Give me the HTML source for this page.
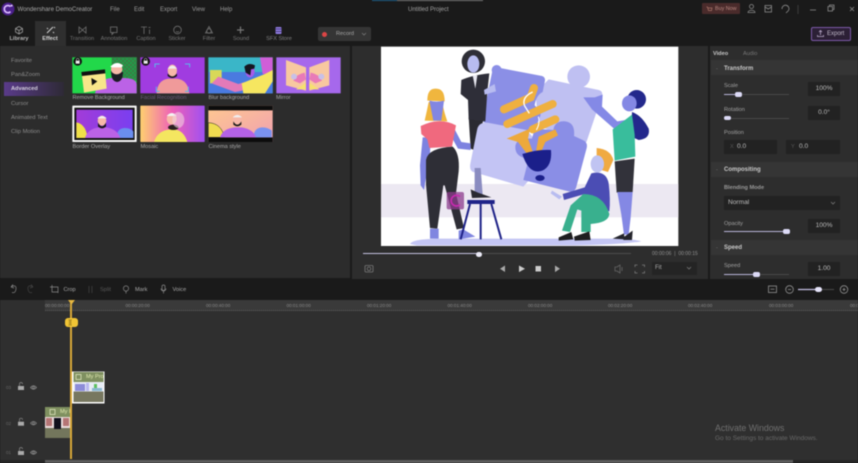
<!DOCTYPE html>
<html><head><meta charset="utf-8"><style>
html,body{margin:0;padding:0;background:#1a1a1a}
#p{position:relative;width:858px;height:463px;overflow:hidden;background:#1a1a1a;font-family:"Liberation Sans",sans-serif;color:#bbb;filter:blur(.4px)}
#p>*,.a{position:absolute}
.t{position:absolute;white-space:nowrap;font-size:5.6px;line-height:8px}
.c{transform:translateX(-50%)}
.b{font-weight:bold}
.box{position:absolute;background:#222;color:#bbb;font-size:6.6px;line-height:14px;text-align:center}
.hd{position:absolute;left:711px;width:147px;height:15px;background:#353535}
.m{color:#8a8a8a;font-size:5.8px}
</style></head><body><div id="p">

<!-- top bar -->
<svg style="left:1px;top:2px" width="14" height="14" viewBox="0 0 14 14"><circle cx="7" cy="7" r="6.5" fill="#4a1f8a"/><path d="M9.500 4.600A3.600 3.600 0 1 0 9.500 9.600" fill="none" stroke="#d9b8ff" stroke-width="1.700"/><circle cx="10.600" cy="3.600" r="1" fill="#e8d0ff"/></svg>
<div class="t" style="left:17.500px;top:5.500px;font-size:6.100px;color:#a8a8a8">Wondershare DemoCreator</div>
<div class="t" style="left:110px;top:5.500px;font-size:6px;color:#999">File</div>
<div class="t" style="left:134px;top:5.500px;font-size:6px;color:#999">Edit</div>
<div class="t" style="left:160px;top:5.500px;font-size:6px;color:#999">Export</div>
<div class="t" style="left:192px;top:5.500px;font-size:6px;color:#999">View</div>
<div class="t" style="left:220px;top:5.500px;font-size:6px;color:#999">Help</div>
<div class="t" style="left:408px;top:5.500px;font-size:6px;color:#a0a0a0">Untitled Project</div>
<div style="left:372px;top:0;width:26px;height:1px;background:#1e5f88"></div>
<div style="left:397px;top:0;width:86px;height:1px;background:#777"></div>

<div style="left:702px;top:3px;width:38px;height:11px;background:#4a2b2b;border-radius:1px"></div>
<svg style="left:706px;top:5.500px" width="7" height="7" viewBox="0 0 7 7" fill="none" stroke="#a87468" stroke-width=".7"><path d="M.5 1h1l1 3.500h3L6 2H2"/></svg>
<div class="t" style="left:715px;top:5px;font-size:5.400px;color:#b88880">Buy Now</div>
<svg style="left:745px;top:2px" width="113" height="14" viewBox="0 0 113 14" fill="none" stroke="#8a8a8a" stroke-width=".8">
<circle cx="6.500" cy="4.500" r="2"/><path d="M3 10.500C3 7.500 10 7.500 10 10.500Z"/>
<rect x="20" y="3.500" width="6.500" height="6.500"/><path d="M20 5l3.200 2L26.500 5"/>
<path d="M37 7a3.500 3.500 0 1 1 6.500 1.500M41 11l2.500-2.500"/>
<path d="M53 3v9" stroke="#444"/>
<path d="M65 8h6"/><rect x="83" y="4.500" width="4.500" height="4.500"/><path d="M84.500 4.500V3h4.500v4.500h-1.500"/>
<path d="M105 5l4 4M109 5l-4 4"/></svg>

<!-- toolbar -->
<div style="left:35px;top:21px;width:31px;height:25px;background:#2f2f2f"></div>
<svg style="left:0;top:20px" width="310" height="26" viewBox="0 0 310 26" fill="none" stroke="#707070" stroke-width=".8">
<path d="M15.500 8.500l3.500-2 3.500 2v3.500l-3.500 2-3.500-2zM15.500 8.500l3.500 2 3.500-2M19 10.500V14" stroke="#999"/>
<path d="M47 13l6-6M54 7l1 1M47 8l1 1M53 12l1 1" stroke="#ccc" stroke-width="1.100"/>
<path d="M79 7v6l3.500-3zM86 7v6l-3.500-3z"/>
<rect x="110.500" y="7" width="6.500" height="5.500"/><path d="M112 12.500v2l2-2"/>
<path d="M141 7h6M144 7v7M149.500 9.500v4.500M148.500 7.500h2"/>
<circle cx="177.500" cy="10" r="3.800"/><path d="M176 9h.1M179 9h.1M176 11.500q1.500 1 3 0"/>
<path d="M209 6.500l3.500 6.500h-7z"/><circle cx="209" cy="11" r="2.200"/>
<path d="M240.500 6.500v7M237 10h7" stroke="#777" stroke-width="1.200"/>
<rect x="275.500" y="7" width="6" height="7" rx="1" fill="#8f7ae0" stroke="none"/><path d="M275 9h7M275 11.500h7" stroke="#3a3060"/>
</svg>
<div class="t c b" style="left:19px;top:35px;color:#b8b8b8">Library</div>
<div class="t c b" style="left:50px;top:35px;color:#d8d8d8">Effect</div>
<div class="t c" style="left:82px;top:35px;color:#6f6f6f">Transition</div>
<div class="t c" style="left:114px;top:35px;color:#747474">Annotation</div>
<div class="t c" style="left:146px;top:35px;color:#747474">Caption</div>
<div class="t c" style="left:177px;top:35px;color:#747474">Sticker</div>
<div class="t c" style="left:209px;top:35px;color:#747474">Filter</div>
<div class="t c" style="left:241px;top:35px;color:#747474">Sound</div>
<div class="t c" style="left:279px;top:35px;color:#808080">SFX Store</div>

<div style="left:318px;top:27px;width:53px;height:14px;background:#353535;border-radius:2px"></div>
<div style="left:322px;top:31.500px;width:5px;height:5px;border-radius:50%;background:#dc4545"></div>
<div class="t" style="left:336px;top:30px;color:#a5a5a5">Record</div>
<svg style="left:361px;top:32px" width="6" height="4"><path d="M1 1l2 2 2-2" stroke="#777" fill="none" stroke-width=".8"/></svg>

<div style="left:811px;top:27px;width:40px;height:14px;background:#2c2036;border:.7px solid #7c5aa8;border-radius:2px;box-sizing:border-box"></div>
<svg style="left:816px;top:29px" width="9" height="9" viewBox="0 0 9 9" fill="none" stroke="#b8a8c8" stroke-width=".8"><path d="M4.500 6V1.500M3 3l1.500-1.500L6 3M1.500 6v1.500h6V6"/></svg>
<div class="t" style="left:827px;top:30px;font-size:6px;color:#c0b8c8">Export</div>

<!-- panels -->
<div style="left:0;top:46px;width:350px;height:232px;background:#2c2c2c"></div>
<div style="left:352px;top:46px;width:356px;height:233px;background:#2d2d2d"></div>
<div style="left:710px;top:46px;width:148px;height:233px;background:#2d2d2d"></div>

<!-- left menu -->
<div style="left:4px;top:82px;width:60px;height:14px;background:linear-gradient(90deg,#5a3b8a,#2e2a36)"></div>
<div class="t m" style="left:11px;top:57px">Favorite</div>
<div class="t m" style="left:11px;top:71px">Pan&amp;Zoom</div>
<div class="t b" style="left:11px;top:85px;color:#d5d0de">Advanced</div>
<div class="t m" style="left:11px;top:100px">Cursor</div>
<div class="t m" style="left:11px;top:114px">Animated Text</div>
<div class="t m" style="left:11px;top:128px">Clip Motion</div>

<!-- thumbnails -->
<svg style="left:0;top:50px" width="350" height="100" viewBox="0 0 1050 300">
<defs>
<linearGradient id="g2" x1="0" y1="0" x2="1" y2="0"><stop offset="0" stop-color="#a23cd8"/><stop offset="1" stop-color="#7a3ff0"/></linearGradient>
<linearGradient id="g3" x1="0" y1="0" x2="1" y2="0"><stop offset="0" stop-color="#ffd070"/><stop offset=".5" stop-color="#ee60b8"/><stop offset="1" stop-color="#a050f0"/></linearGradient>
<linearGradient id="g4" x1="0" y1="0" x2="1" y2="1"><stop offset="0" stop-color="#ffc890"/><stop offset="1" stop-color="#f0a0b0"/></linearGradient>
<pattern id="ch" width="12" height="12" patternUnits="userSpaceOnUse"><rect width="12" height="12" fill="#1f9f4a"/><rect width="6" height="6" fill="#3d7a45"/><rect x="6" y="6" width="6" height="6" fill="#3d7a45"/></pattern>
</defs>
<!-- 1 -->
<rect x="217" y="22" width="193" height="108" fill="#22d84a"/>
<rect x="335" y="22" width="75" height="70" fill="url(#ch)"/>
<path d="M285 130q10-44 50-46l40 0q35 2 35 20v26z" fill="#bb62e6"/>
<path d="M333 62q0 32 18 34 18-2 18-30z" fill="#1c1c24"/><ellipse cx="350" cy="58" rx="17" ry="15" fill="#f6b8a8"/><path d="M331 50q18-20 38-4l-4 6h-30z" fill="#fff"/>
<path d="M244 66l71-8 1 14-70 8z" fill="#111"/><path d="M246 78l70-8 4 46-68 12z" fill="#f8e68a"/><path d="M274 84l18 10-16 12z" fill="#111"/>
<circle cx="233" cy="34" r="13" fill="#111"/><rect x="227" y="32" width="12" height="9" fill="#eee"/><path d="M229 32v-3a4 4 0 0 1 8 0v3" stroke="#eee" fill="none" stroke-width="1.500"/>
<!-- 2 -->
<rect x="421" y="22" width="193" height="108" fill="#a03ce0"/>
<path d="M470 130q2-40 36-44h24q34 4 38 44z" fill="#f09a9a"/>
<ellipse cx="517" cy="62" rx="14" ry="18" fill="#f6b8a8"/><path d="M503 70q14 18 28 0l0 8q-14 12-28 0z" fill="#1a1a1a"/><path d="M503 56q14-18 28 0z" fill="#eee"/>
<path d="M465 52V42h14M555 42h14v10M469 110v14h10M565 110v14h-10" stroke="#5ab8e8" stroke-width="3" fill="none"/>
<circle cx="437" cy="34" r="13" fill="#111"/><rect x="431" y="32" width="12" height="9" fill="#eee"/><path d="M433 32v-3a4 4 0 0 1 8 0v3" stroke="#eee" fill="none" stroke-width="1.500"/>
<!-- 3 -->
<rect x="625" y="22" width="193" height="108" fill="#3ab6c8"/>
<rect x="625" y="66" width="193" height="64" fill="#4a7ae0"/>
<rect x="630" y="60" width="35" height="40" fill="#d8d858"/>
<path d="M780 22h38v50h-30z" fill="#d05ed8"/>
<path d="M655 80l60 22 20-6 0 24-30 6-70-26z" fill="#e27ab8"/>
<path d="M725 100l70-28 23-12v34l-23 36h-65z" fill="#f6e660"/>
<ellipse cx="750" cy="64" rx="14" ry="18" fill="#a65ce8"/><path d="M733 50q14-14 32-4l-2 10-10 2-2 18-14-8z" fill="#151520"/>
<!-- 4 -->
<rect x="829" y="22" width="193" height="108" fill="#a668ec"/>
<path d="M858 30l60 22v70l-60-16zM988 30l-60 22v70l60-16z" fill="#f8c8a0"/>
<path d="M880 92q10-20 34-24l4 20-18 12zM966 92q-10-20-34-24l-4 20 18 12z" fill="#e87ab8"/><path d="M888 118l30 0v-20zM958 118l-30 0v-20z" fill="#f6e070"/>
<circle cx="882" cy="80" r="9" fill="#c8c0e8"/><circle cx="964" cy="80" r="9" fill="#c8c0e8"/>
<!-- 5 -->
<rect x="217" y="167" width="193" height="109" rx="2" fill="#f8f8f8"/>
<rect x="223" y="173" width="181" height="97" fill="#111"/>
<rect x="229" y="179" width="169" height="85" fill="url(#g2)"/>
<path d="M229 217q28 4 34 47h-34z" fill="#f0e048"/><path d="M400 264h-50q0-30 25-30 15 0 25 10z" fill="#6a8ef0"/><path d="M255 264q8-28 42-32h22q34 6 42 32z" fill="#bb62e6"/>
<ellipse cx="306" cy="212" rx="13" ry="15" fill="#f6b8a8"/><path d="M294 218q12 22 24 0v12q-12 10-24 0z" fill="#181818"/><path d="M292 205q14-14 28 0z" fill="#f0f0f0"/>
<!-- 6 -->
<rect x="421" y="167" width="193" height="109" rx="2" fill="url(#g3)"/>
<path d="M462 276q10-34 48-38h14q28 4 38 38z" fill="#f4e660"/>
<ellipse cx="515" cy="207" rx="15" ry="17" fill="#f6b8a8"/><path d="M500 198q16-18 30 0z" fill="#f4f4f4"/><ellipse cx="520" cy="232" rx="16" ry="8" fill="#2a2020"/>
<ellipse cx="535" cy="210" rx="18" ry="24" fill="#f0d0e0" opacity=".6"/>
<!-- 7 -->
<rect x="625" y="167" width="193" height="109" fill="url(#g4)"/>
<rect x="625" y="167" width="193" height="14" fill="#0c0c0c"/><rect x="625" y="262" width="193" height="14" fill="#0c0c0c"/>
<path d="M625 218q40 2 48 44h-48z" fill="#f0dc50" stroke="#222" stroke-width="1.500"/><path d="M815 262h-55q2-30 28-30 16 0 27 10z" fill="#7a92f0"/><path d="M660 262q8-26 44-30h22q34 6 42 30z" fill="#b462e6"/>
<ellipse cx="712" cy="208" rx="13" ry="15" fill="#f6b8a8"/><path d="M700 214q12 20 24 0v10q-12 10-24 0z" fill="#181818"/><path d="M698 202q14-14 28 0z" fill="#f0f0f0"/>
</svg>
<div class="t" style="left:72.500px;top:94px;color:#a8a8a8">Remove Background</div>
<div class="t" style="left:140.500px;top:94px;color:#6a5c78">Facial Recognition</div>
<div class="t" style="left:208.500px;top:94px;color:#a8a8a8">Blur background</div>
<div class="t" style="left:276px;top:94px;color:#a8a8a8">Mirror</div>
<div class="t" style="left:72.500px;top:143px;color:#a8a8a8">Border Overlay</div>
<div class="t" style="left:140.500px;top:143px;color:#a8a8a8">Mosaic</div>
<div class="t" style="left:208.500px;top:143px;color:#a8a8a8">Cinema style</div>

<!-- preview art -->
<svg style="left:350px;top:40px" width="360" height="210" viewBox="0 0 1080 630">
<rect x="93" y="20" width="892" height="598" fill="#fff"/>
<rect x="93" y="432" width="892" height="100" fill="#ece8f2"/>
<path d="M180 612q6-14 80-16h530q70 2 84 8-60 10-200 12H200z" fill="#c4c6f4"/>
<!-- top woman lower body behind pieces -->
<path d="M356 232h46l-26 100-14-6z" fill="#2a2a32"/>
<!-- puzzle top-right -->
<circle cx="686" cy="110" r="34" fill="#bfc0f2"/>
<path d="M596 118l150 32q14 4 10 18l-46 136q-4 8-14 4l-130-50-10-100z" fill="#bfc0f2"/>
<!-- top-left -->
<path d="M430 80l146 28q12 4 8 18l-6 30q-20 10-24 40 24 20 16 34l-12 30-36 30-122-44-2-12 28-136q2-18 4-18z" fill="#8b8fe6"/>
<circle cx="440" cy="90" r="15" fill="#8b8fe6"/>
<!-- bottom-left -->
<path d="M412 248l118 22 70 80-80 90-150-44q-14-4-8-30l20-100q6-20 30-18z" fill="#c3c4f4"/>
<!-- bottom-right -->
<path d="M610 270q4-28 36-26 30 4 26 44l26 12q16 6 12 24l-32 120q-6 14-22 10l-136-34 16-64q-40-4-40-34t50-26l8-30z" fill="#8a8ee6"/>
<!-- bulb -->
<g stroke="#efb040" stroke-width="24" stroke-linecap="round" fill="none"><path d="M462 208l80-36 10-28"/><path d="M472 252l136-60"/><path d="M548 268l68-30"/></g>
<path d="M470 296l70-30-6 30 16 44-20 0-26-34zM558 334l8-44 50-22 8 18-38 20-12 28z" fill="#eda93c"/>
<path d="M517 342q44-14 86-12 4 48-26 62-40 14-60-50z" fill="#1b1f8a"/><ellipse cx="570" cy="414" rx="14" ry="9" fill="#1b1f8a"/>
<path d="M548 156q-34 16-24 42l14 22" stroke="#fff" stroke-width="4" fill="none"/><path d="M565 230q6 20-6 40" stroke="#fff" stroke-width="3" fill="none"/>
<!-- woman left -->
<path d="M236 186q-6 30-12 56l68 2q-14-40-14-58z" fill="#f0b63e"/><path d="M232 182q0-38 26-36 26 0 26 38z" fill="#f0b63e"/>
<path d="M238 182q22 6 44 0l-8 60h-24z" fill="#8286e2"/>
<path d="M218 292l24 0-2 50-18 108-10-14-2-60zM312 264l22 42 28 4 0 20-38-4-22-40z" fill="#7d82e0"/>
<path d="M212 258q30-14 50-14 30-2 56 12l-12 64-68 4-6-26-18-16z" fill="#f0697e"/>
<path d="M228 360q6-36 80-40 22 20 18 74l-8 66 24 104-22 4-36-132-4 0-18 130-22-2-12-130z" fill="#2e2e36"/>
<path d="M240 566h26v30h-26zM326 572l14-4 36 22-50 8z" fill="#8086e0"/>
<!-- woman top -->
<circle cx="370" cy="64" r="35" fill="#2e2e36"/><ellipse cx="370" cy="72" rx="18" ry="26" fill="#b8bcf0"/>
<path d="M334 120q30-14 84-20l-6 54-6 90-50-6-2-58-22-18z" fill="#2e2e38"/><path d="M368 106h14l-6 40z" fill="#e8e8f0"/>
<path d="M402 150l32-18 4 22-34 10z" fill="#b8bcf0"/>
<path d="M374 384l18 0 6 80-24-6z" fill="#8a8cc0"/>
<path d="M362 448l22 10 40 14-58 2z" fill="#2a2a32"/>
<!-- stool -->
<path d="M352 480h82v12h-82z" fill="#1f2388"/>
<path d="M360 492l-28 106M392 492v106M424 492l30 106" stroke="#1f2388" stroke-width="6" fill="none"/>
<!-- logo watermark -->
<rect x="290" y="456" width="52" height="52" rx="6" fill="#8c3c8c" opacity=".75"/><path d="M330 470a16 16 0 1 0 0 24" stroke="#c82ab0" stroke-width="5" fill="none"/>
<!-- woman right -->
<path d="M700 172l34 0 24-8-2 36 46 44 48-8 0 34-58-4-66-58z" fill="#8489e6"/>
<circle cx="860" cy="178" r="28" fill="#23288c"/>
<path d="M846 216q30 10 50 50 6 30-30 34l-22-10z" fill="#23288c"/>
<ellipse cx="838" cy="190" rx="22" ry="24" fill="#8488e4"/>
<path d="M788 268l58-44 8 60 2 66-62 12z" fill="#39bd9c"/>
<path d="M794 364l60-8-6 100-48 2z" fill="#32323a"/>
<path d="M802 456h46l-6 76-6 52h-14l-8-60z" fill="#8488e4"/>
<path d="M788 596l34-16 2 18zM820 592l28-20-2 28-26 0z" fill="#24242c"/>
<!-- seated -->
<path d="M740 324q42 4 50 36l-16 36-34-10z" fill="#f0aa42"/><ellipse cx="742" cy="372" rx="20" ry="26" fill="#c0c4f2"/>
<path d="M724 400q44-10 52 30 6 50 2 84l-62-20-18-30-56 16-4-18 66-20z" fill="#4b4db4"/>
<path d="M700 462q60 0 78 60-2 26-56 30l0 24-28 0 0-64-12-4-22 68-24-4 26-76z" fill="#39b08e"/>
<path d="M626 592l38-16 6 22-44 4zM672 590l46-16 4 26-48 2z" fill="#1e1e20"/>
<path d="M606 452l30 18-8 8-26-18z" fill="#b8bcf0"/>
</svg>

<!-- scrubber -->
<div style="left:363px;top:253px;width:116px;height:1.200px;background:#c4c0e0"></div>
<div style="left:479px;top:253px;width:152px;height:1px;background:#4c4c4c"></div>
<div style="left:476px;top:251.500px;width:6px;height:5px;border-radius:3px;background:#ecebf8"></div>
<div class="t" style="left:652px;top:250px;color:#909090;font-size:5px">00:00:06 &nbsp;|&nbsp; 00:00:15</div>
<svg style="left:352px;top:262px" width="356" height="14" viewBox="0 0 356 14" fill="none" stroke="#7a7a7a" stroke-width=".8">
<rect x="13" y="3.500" width="8" height="6.500" rx="1"/><circle cx="17" cy="6.800" r="1.800"/>
<path d="M153 3.500v6.500l-5-3.200z" fill="#aaa" stroke="none"/>
<path d="M167 3.500l6 3.300-6 3.300z" fill="#ccc" stroke="none"/><rect x="183.500" y="4" width="5.500" height="5.500" fill="#ccc" stroke="none"/>
<path d="M203 3.500l5 3.300-5 3.300z" fill="#aaa" stroke="none"/>
<path d="M263 5h2l3-2v8l-3-2h-2zM270 5v4" stroke="#666"/>
<path d="M283 5V3h2.500M290 3h2.500v2M292.500 9v2H290M285.500 11H283V9"/></svg>
<div style="left:652px;top:262px;width:45px;height:13px;background:#242424"></div>
<div class="t" style="left:655px;top:264px;font-size:6px;color:#aaa">Fit</div>
<svg style="left:686px;top:266px" width="6" height="4"><path d="M1 1l2 2 2-2" stroke="#777" fill="none" stroke-width=".8"/></svg>

<!-- right panel -->
<div class="t b" style="left:713px;top:50px;color:#c8c8c8">Video</div>
<div class="t" style="left:743px;top:50px;color:#777">Audio</div>
<div class="hd" style="top:60px"></div>
<div class="t b" style="left:724px;top:64.500px;font-size:6px;color:#c8c8c8">Transform</div>
<div class="t" style="left:716px;top:64.500px;color:#777">-</div>
<div class="t" style="left:724px;top:82px;color:#a0a0a0">Scale</div>
<div style="left:724px;top:94px;width:14px;height:1px;background:#b8b4d8"></div><div style="left:738px;top:94px;width:51px;height:1px;background:#484848"></div>
<div style="left:735px;top:92px;width:7px;height:4.500px;border-radius:2px;background:#dcdaf6"></div>
<div class="box" style="left:808px;top:82px;width:32px;height:14px">100%</div>
<div class="t" style="left:724px;top:106px;color:#a0a0a0">Rotation</div>
<div style="left:724px;top:118px;width:65px;height:1px;background:#484848"></div>
<div style="left:724px;top:115.500px;width:7px;height:4.500px;border-radius:2px;background:#dcdaf6"></div>
<div class="box" style="left:808px;top:106px;width:32px;height:14px">0.0°</div>
<div class="t" style="left:724px;top:129px;color:#a0a0a0">Position</div>
<div class="box" style="left:724px;top:140px;width:53px;height:14px;text-align:left;padding-left:13px;box-sizing:border-box">0.0</div>
<div class="t" style="left:730px;top:143px;color:#555">X</div>
<div class="box" style="left:786px;top:140px;width:54px;height:14px;text-align:left;padding-left:13px;box-sizing:border-box">0.0</div>
<div class="t" style="left:791px;top:143px;color:#555">Y</div>
<div class="hd" style="top:162px"></div>
<div class="t b" style="left:724px;top:165.500px;font-size:6px;color:#c8c8c8">Compositing</div>
<div class="t" style="left:716px;top:165.500px;color:#777">-</div>
<div class="t b" style="left:724px;top:184px;color:#999">Blending Mode</div>
<div class="box" style="left:724px;top:196px;width:116px;height:14px;text-align:left;padding-left:4px;box-sizing:border-box">Normal</div>
<svg style="left:830px;top:201px" width="6" height="4"><path d="M1 1l2 2 2-2" stroke="#777" fill="none" stroke-width=".8"/></svg>
<div class="t" style="left:724px;top:220px;color:#a0a0a0">Opacity</div>
<div style="left:724px;top:230.500px;width:62px;height:1px;background:#b8b4d8"></div>
<div style="left:782.500px;top:229px;width:7px;height:4.500px;border-radius:2px;background:#dcdaf6"></div>
<div class="box" style="left:808px;top:219px;width:32px;height:14px">100%</div>
<div class="hd" style="top:240px"></div>
<div class="t b" style="left:724px;top:244px;font-size:6px;color:#c8c8c8">Speed</div>
<div class="t" style="left:716px;top:244px;color:#777">-</div>
<div class="t" style="left:724px;top:262px;color:#a0a0a0">Speed</div>
<div style="left:724px;top:273.500px;width:32px;height:1px;background:#b8b4d8"></div><div style="left:756px;top:273.500px;width:33px;height:1px;background:#484848"></div>
<div style="left:753px;top:272px;width:7px;height:4.500px;border-radius:2px;background:#dcdaf6"></div>
<div class="box" style="left:808px;top:262px;width:32px;height:14px">1.00</div>

<!-- timeline toolbar -->
<svg style="left:0;top:279px" width="200" height="21" viewBox="0 0 200 21" fill="none" stroke="#8a8a8a" stroke-width=".7">
<path d="M11 8l2-2.500M11 8l3 1M11.500 7.500q5-2 4.500 2.500t-4 3.500"/><path d="M33 8l-2-2.500M33 8l-3 1M32.500 7.500q-5-2-4.500 2.500t4 3.500" stroke="#444"/>
<path d="M52 6v7h6M50 8h8v6"/><path d="M89 7v7M92 7v7" stroke="#444"/>
<circle cx="126" cy="9.500" r="2.600"/><path d="M126 12v2.500"/>
<rect x="162" y="6" width="3" height="5.500" rx="1.500"/><path d="M161 9.500a2.500 2.500 0 0 0 5 0M163.500 12v2.500"/></svg>
<div class="t" style="left:63.500px;top:286px;color:#a8a8a8;font-size:5.600px">Crop</div>
<div class="t" style="left:100px;top:286px;color:#585858;font-size:5.600px">Split</div>
<div class="t" style="left:135px;top:286px;color:#a8a8a8;font-size:5.600px">Mark</div>
<div class="t" style="left:172.500px;top:286px;color:#a8a8a8;font-size:5.600px">Voice</div>
<svg style="left:765px;top:283px" width="90" height="14" viewBox="0 0 90 14" fill="none" stroke="#909090" stroke-width=".8">
<rect x="3.500" y="3" width="8" height="6.500"/><path d="M5.500 6.200h4"/><circle cx="24.500" cy="6.500" r="3.800"/><path d="M23 6.500h3"/><circle cx="79" cy="6.500" r="3.800"/><path d="M77.500 6.500h3M79 5v3"/>
<path d="M33 6.500h21" stroke="#c4c0e4" stroke-width="1.200"/><path d="M54 6.500h15" stroke="#555"/></svg>
<div style="left:815px;top:287px;width:6.500px;height:5px;border-radius:3px;background:#e6e4fa"></div>

<!-- timeline -->
<div style="left:0;top:300px;width:858px;height:163px;background:#2f2f2f"></div>
<div style="left:45px;top:300px;width:813px;height:11px;background:#3a3a3a;border-bottom:1px dotted #5a5a5a;box-sizing:border-box"></div>
<div class="t" style="left:45px;top:301.500px;font-size:4.600px;color:#888">00:00:00:00</div>
<div class="t" style="left:125.500px;top:301.500px;font-size:4.600px;color:#888">00:00:20:00</div>
<div class="t" style="left:206px;top:301.500px;font-size:4.600px;color:#888">00:00:40:00</div>
<div class="t" style="left:286.500px;top:301.500px;font-size:4.600px;color:#888">00:01:00:00</div>
<div class="t" style="left:367px;top:301.500px;font-size:4.600px;color:#888">00:01:20:00</div>
<div class="t" style="left:447.500px;top:301.500px;font-size:4.600px;color:#888">00:01:40:00</div>
<div class="t" style="left:528px;top:301.500px;font-size:4.600px;color:#888">00:02:00:00</div>
<div class="t" style="left:608px;top:301.500px;font-size:4.600px;color:#888">00:02:20:00</div>
<div class="t" style="left:688px;top:301.500px;font-size:4.600px;color:#888">00:02:40:00</div>
<div class="t" style="left:769px;top:301.500px;font-size:4.600px;color:#888">00:03:00:00</div>
<div class="t" style="left:850px;top:301.500px;font-size:4.600px;color:#888">00:03:20:00</div>
<div style="left:0;top:460px;width:858px;height:3px;background:#262626"></div>
<div style="left:45px;top:460px;width:748px;height:3px;background:#5c5c5c"></div>

<!-- track controls -->
<svg style="left:0;top:380px" width="45" height="80" viewBox="0 0 45 80" fill="none" stroke="#888" stroke-width=".7">
<g><rect x="18" y="6" width="6" height="4" fill="#aaa" stroke="none"/><path d="M19.500 6V4a1.500 1.500 0 0 1 3 0"/><path d="M30.500 7.500q3-3.500 6 0-3 3.500-6 0z"/><circle cx="33.500" cy="7.500" r="1"/></g>
<g transform="translate(0,35.700)"><rect x="18" y="6" width="6" height="4" fill="#aaa" stroke="none"/><path d="M19.500 6V4a1.500 1.500 0 0 1 3 0"/><path d="M30.500 7.500q3-3.500 6 0-3 3.500-6 0z"/><circle cx="33.500" cy="7.500" r="1"/></g>
<g transform="translate(0,65)"><rect x="18" y="6" width="6" height="4" fill="#aaa" stroke="none"/><path d="M19.500 6V4a1.500 1.500 0 0 1 3 0"/><path d="M30.500 7.500q3-3.500 6 0-3 3.500-6 0z"/><circle cx="33.500" cy="7.500" r="1"/></g></svg>
<div class="t" style="left:6px;top:384px;font-size:4.600px;color:#666">03</div>
<div class="t" style="left:6px;top:419.500px;font-size:4.600px;color:#666">02</div>
<div class="t" style="left:6px;top:449px;font-size:4.600px;color:#666">01</div>

<!-- clips -->
<svg style="left:45px;top:371px;overflow:hidden" width="60" height="68" viewBox="0 0 60 68">
<rect x="27" y=".5" width="32.500" height="32" fill="#fff"/>
<rect x="28.500" y="1" width="30" height="10" fill="#7f9060"/>
<rect x="28.500" y="11" width="30" height="9.500" fill="#e8ecf6"/>
<rect x="30" y="13" width="10" height="7" fill="#8c8cd8"/><rect x="41" y="12" width="3" height="8" fill="#b8b8f0"/><rect x="49" y="13" width="3" height="4" fill="#5cc060"/><rect x="47" y="17" width="10" height="3" fill="#8ab8d0"/>
<rect x="28.500" y="20.500" width="30" height="10.500" fill="#77775f"/>
<rect x="0" y="36" width="26" height="31" fill="#73765c"/>
<rect x="0" y="36" width="26" height="10" fill="#7f9060"/>
<rect x="0" y="46" width="26" height="11" fill="#e8dcdc"/>
<rect x="1" y="47" width="6" height="8" fill="#a04848" opacity=".7"/><rect x="9" y="47" width="7" height="11" fill="#10101c"/><rect x="18" y="47" width="6" height="8" fill="#a04848" opacity=".7"/>
<rect x="31" y="3.500" width="5" height="5" fill="none" stroke="#e8f0c8" stroke-width=".7"/>
<rect x="5" y="38.500" width="5" height="5" fill="none" stroke="#e8f0c8" stroke-width=".7"/>
</svg>
<div class="t" style="left:86px;top:372.500px;width:18px;overflow:hidden;font-size:5.600px;color:#dfe8b0">My Pro</div>
<div class="t" style="left:60px;top:407.500px;width:11px;overflow:hidden;font-size:5.600px;color:#dfe8b0">My Pro</div>

<!-- playhead -->
<div style="left:70px;top:302px;width:1.700px;height:157px;background:#d8a838"></div>
<svg style="left:68px;top:300px" width="7" height="5"><path d="M0 0h7L3.500 4.500z" fill="#e8b840"/></svg>
<div style="left:65px;top:318px;width:13px;height:9px;background:#f0c435;border-radius:3px"></div>
<div class="t" style="left:68.500px;top:318.500px;color:#6a5410;font-size:6px">][</div>

<!-- watermark -->
<div class="t" style="left:715px;top:423px;font-size:8.800px;line-height:11px;color:#707070">Activate Windows</div>
<div class="t" style="left:715px;top:434px;font-size:6.500px;line-height:9px;color:#686868">Go to Settings to activate Windows.</div>
</div></body></html>
